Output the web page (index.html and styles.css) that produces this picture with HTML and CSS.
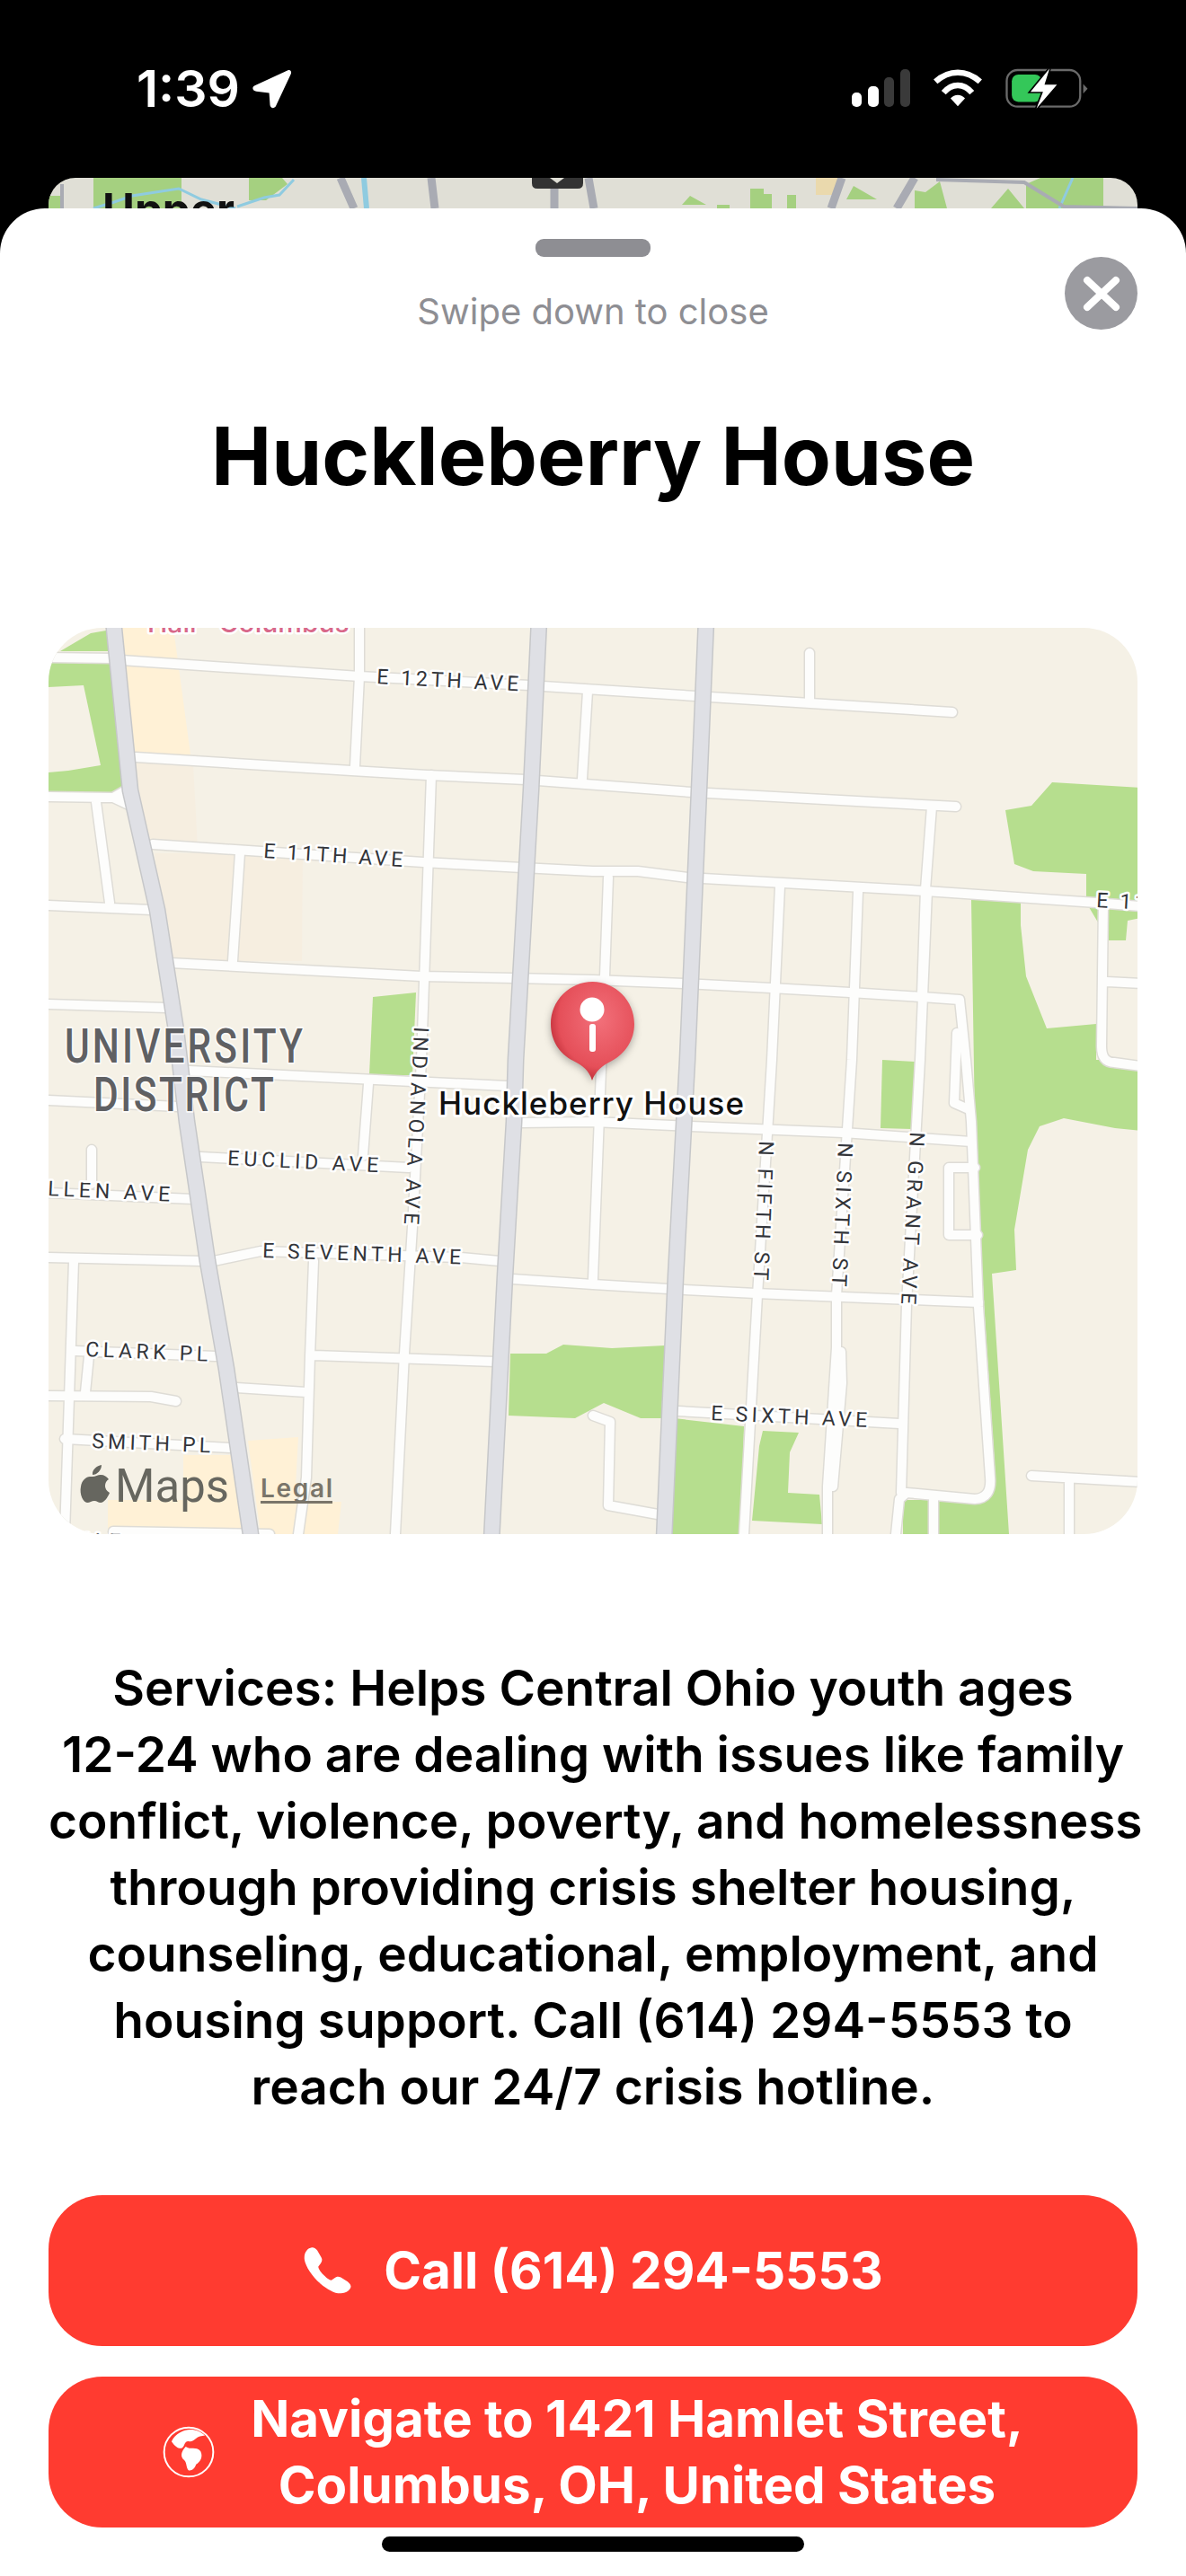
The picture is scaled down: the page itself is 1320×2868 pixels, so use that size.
FILE: index.html
```html
<!DOCTYPE html>
<html>
<head>
  <meta charset="UTF-8">
  <title>Huckleberry House</title>
  <link rel="stylesheet" href="styles.css">
</head>
<body>
  <div class="status-bar">
    <div class="status-left">
      <span class="time">1:39</span>
      <svg class="arrow-icon" viewBox="414 19 138 138"><path fill="#fff" d="M538 23C546 20 552 28 548 36L497 145C492 155 478 153 477 142L474 100L430 95C417 93 414 80 425 75Z"/></svg>
    </div>
    <div class="status-right">
      <svg class="signal-icon" viewBox="0 0 65 42">
        <rect x="0" y="26" width="11" height="16" rx="5" fill="#fff"/>
        <rect x="18" y="19" width="12" height="23" rx="5" fill="#fff"/>
        <rect x="36" y="9" width="11" height="33" rx="5" fill="#3a3a3a"/>
        <rect x="54" y="0" width="11" height="42" rx="5" fill="#3a3a3a"/>
      </svg>
      <svg class="wifi-icon" viewBox="318 20 174 128">
        <path fill="none" stroke="#fff" stroke-width="20" d="M328 62C375 20 435 20 482 62"/>
        <path fill="none" stroke="#fff" stroke-width="20" d="M356 100C385 66 425 66 454 100"/>
        <path fill="#fff" d="M405 147L380 120C392 104 418 104 430 120Z"/>
      </svg>
      <svg class="battery-icon" viewBox="564 14 280 142">
        <rect x="568" y="23" width="247" height="123" rx="36" fill="none" stroke="#6a6a6a" stroke-width="7"/>
        <rect x="585" y="38" width="100" height="92" rx="22" fill="#34c759"/>
        <path fill="#6a6a6a" d="M825 70L840 86L825 102Z"/>
        <path fill="#fff" stroke="#000" stroke-width="10" paint-order="stroke" d="M712 18L648 96H690L668 152L737 72H695Z"/>
      </svg>
    </div>
  </div>

  <div class="back-card">
    <svg class="back-map" viewBox="54 198 1212 80">
      <rect x="54" y="198" width="1212" height="80" fill="#e0dfd6"/>
      <path fill="#a5d080" d="M104 198H202V240H104ZM54 218H69V240H54ZM277 198H314L320 205L296 223H277ZM835 210H850V216H859V240H835ZM876 217H886V240H876ZM759 228L768 218L786 228ZM798 228H812V240H798ZM942 222L950 207L976 222ZM1018 232V212L1030 214L1046 202L1054 232ZM1103 232L1122 210L1140 232ZM1142 205L1158 198H1228V232H1142Z"/>
      <path fill="#ead9ad" d="M908 198H932V217H908Z"/>
      <path fill="none" stroke="#8fcbe0" stroke-width="3" d="M104 232L127 225L147 218L199 210L224 222L262 232M264 230L294 220L311 217L327 200M1194 198L1179 232"/>
      <path fill="none" stroke="#8fcbe0" stroke-width="6" d="M405 198L408 232"/>
      <path fill="none" stroke="#a9abb3" stroke-width="4" d="M69 205V232M1042 200L1140 203L1184 230L1266 232"/>
      <path fill="none" stroke="#a9abb3" stroke-width="9" d="M379 198L394 232M480 198L484 232M617 205V232M655 198L661 232M937 198L925 232M1018 198L998 232"/>
      <path fill="#333" d="M592 198H612L620 204L628 198H649V204Q649 210 643 210H598Q592 210 592 204Z"/>
      <text class="back-label" x="114" y="251" textLength="147" lengthAdjust="spacingAndGlyphs">Upper</text>
    </svg>
  </div>

  <div class="sheet">
    <div class="handle"></div>
    <button class="close-btn">
      <svg viewBox="0 0 42 40"><path fill="none" stroke="#fff" stroke-width="8" stroke-linecap="round" d="M5 5L37 35M37 5L5 35"/></svg>
    </button>
    <div class="swipe-hint">Swipe down to close</div>
    <h1 class="title">Huckleberry House</h1>

    <div class="map">
      <svg viewBox="54 699 1212 1009">
        <defs>
          <radialGradient id="pin-fill" cx="0.58" cy="0.38" r="0.62">
            <stop offset="0" stop-color="#f2707a"/>
            <stop offset="0.78" stop-color="#e54f59"/>
            <stop offset="1" stop-color="#c1303a"/>
          </radialGradient>
          <g id="streets">
            <path d="M54 732L126 733M135 735L400 753L589 763L774 775L1060 793"/>
            <path d="M901 727V780M400 699V753L395 853M654 770L648 867"/>
            <path d="M151 843L391 858L475 863L585 868L770 882L1064 898"/>
            <path d="M1037 898L1030 990L1026 1107"/>
            <path d="M54 887L126 888L145 877M126 888L145 897M107 893L122 1005"/>
            <path d="M170 940L471 960L581 966L660 970H710L765 977L1030 992L1220 1005L1270 1009"/>
            <path d="M480 863L469 1180L459 1366L450 1507L440 1708"/>
            <path d="M267 950L259 1070M54 1008L168 1013M54 1118L185 1122"/>
            <path d="M189 1072L469 1087L572 1089L660 1091L761 1095L858 1100L946 1105L1026 1110L1068 1113L1075 1180L1081 1249L1089 1455L1102 1645Q1104 1668 1085 1669L1009 1662L1001 1669L997 1708"/>
            <path d="M868 987L859 1180L843 1442L828 1708"/>
            <path d="M955 993L948 1180L931 1442V1500L921 1655V1708M936 1505L937 1540L927 1655"/>
            <path d="M1032 992L1024 1180L1009 1452L1003 1662"/>
            <path d="M677 977L673 1087L660 1424"/>
            <path d="M54 1225L198 1232M210 1192L564 1209M579 1250L660 1249L769 1254L938 1261L1081 1271"/>
            <path d="M410 1207L404 1287M223 1288L455 1300M54 1328L215 1335M102 1280V1318"/>
            <path d="M54 1400L225 1404M238 1404L290 1393L513 1400L556 1404M570 1424L660 1430L744 1435L841 1440L1089 1450"/>
            <path d="M82 1404L72 1708M349 1404L345 1510L341 1645L332 1708M349 1509L551 1516M263 1545L341 1550"/>
            <path d="M84 1504L240 1510M99 1510L95 1550M54 1554L168 1555L196 1560M72 1602L257 1612M126 1705L300 1708"/>
            <path d="M755 1571L1001 1585M660 1576L679 1583L677 1676L732 1686"/>
            <path d="M1085 1300H1056V1375H1088M1065 1150L1062 1228L1078 1235"/>
            <path d="M1228 1005L1226 1165Q1226 1183 1240 1183L1270 1187M1232 1093L1270 1095"/>
            <path d="M1148 1643L1270 1650M1190 1648V1708M1039 1670V1708"/>
          </g>
          <g id="arterials">
            <path d="M126 690L145 880L175 1013L196 1147L208 1249L231 1404L252 1524L280 1715"/>
            <path d="M600 690L591 880L574 1180L572 1249L562 1421L547 1715"/>
            <path d="M786 690L778 880L765 1180L752 1421L739 1715"/>
          </g>
        </defs>

        <rect x="54" y="699" width="1212" height="1009" fill="#f5f1e6"/>

        <path fill="#f6eee0" d="M150 850H215L220 945H165ZM172 950H337L336 1070H185Z"/>
        <path fill="#fff1d6" d="M135 699H193L212 840H150ZM204 1620H260L272 1708H120V1670H204ZM276 1604L332 1600L328 1672H380L376 1708H290Z"/>

        <path fill="#b6de8e" d="M67 725L101 705L118 702L122 725Z"/>
        <path fill="#b6de8e" d="M54 737H122L140 880L126 883H54Z"/>
        <path fill="#f5f1e6" d="M54 765L93 763L112 852L76 858L54 860Z"/>
        <path fill="#b6de8e" d="M415 1110L463 1105L459 1197L411 1197Z"/>
        <path fill="#b6de8e" d="M1119 902L1148 897L1171 871L1270 877V1022L1255 1025L1253 1047L1234 1047L1209 1005V973L1150 970L1129 962Z"/>
        <path fill="#b6de8e" d="M1081 1002H1136V1030L1142 1087L1165 1145L1220 1140V1180H1270V1259L1241 1256L1184 1245L1157 1254L1144 1280L1129 1369L1131 1414L1104 1418L1123 1708H1045V1672H1085L1108 1645L1095 1450L1085 1250Z"/>
        <path fill="#b6de8e" d="M1005 1670H1035V1708H1005Z"/>
        <path fill="#b6de8e" d="M568 1507H608L627 1497L681 1501L740 1498L736 1579H713L672 1562L640 1579L566 1576Z"/>
        <path fill="#b6de8e" d="M750 1579L828 1588L825 1708H748Z"/>
        <path fill="#b6de8e" d="M849 1593L889 1595L879 1617L877 1662L912 1664L915 1697L837 1693L845 1610Z"/>
        <path fill="#b6de8e" d="M982 1180L1018 1182L1014 1257L980 1256Z"/>

        <use href="#streets" class="street-edge"/>
        <use href="#streets" class="street"/>
        <use href="#arterials" class="arterial-edge"/>
        <use href="#arterials" class="arterial"/>

        <text class="poi-top" x="164" y="704">Hall · Columbus</text>

        <text class="road-label" transform="translate(419 761) rotate(3)" textLength="158">E 12TH AVE</text>
        <text class="road-label" transform="translate(293 955) rotate(3.7)" textLength="155">E 11TH AVE</text>
        <text class="road-label" transform="translate(1220 1010) rotate(3)" textLength="155">E 11TH AVE</text>
        <text class="road-label" transform="translate(253 1297) rotate(2.8)" textLength="168">EUCLID AVE</text>
        <text class="road-label" transform="translate(33 1330) rotate(2.8)" textLength="156">ALLEN AVE</text>
        <text class="road-label" transform="translate(292 1400) rotate(1.9)" textLength="221">E SEVENTH AVE</text>
        <text class="road-label" transform="translate(95 1510) rotate(2.3)" textLength="136">CLARK PL</text>
        <text class="road-label" transform="translate(102 1612) rotate(2.3)" textLength="132">SMITH PL</text>
        <text class="road-label" transform="translate(70 1722) rotate(2)" textLength="64">AVE</text>
        <text class="road-label" transform="translate(791 1581) rotate(2.6)" textLength="174">E SIXTH AVE</text>
        <text class="road-label" transform="translate(845 1270) rotate(92.2)" textLength="155">N FIFTH ST</text>
        <text class="road-label" transform="translate(933 1272) rotate(92.5)" textLength="160">N SIXTH ST</text>
        <text class="road-label" transform="translate(1013 1260) rotate(93)" textLength="192">N GRANT AVE</text>
        <text class="road-label" transform="translate(461 1143) rotate(92.9)" textLength="220">INDIANOLA AVE</text>

        <text class="district" transform="translate(72 1183) scale(0.8 1)" textLength="331">UNIVERSITY</text>
        <text class="district" transform="translate(104 1237) scale(0.8 1)" textLength="251">DISTRICT</text>

        <g class="pin">
          <path fill="url(#pin-fill)" d="M659 1203C656 1192 648 1186 638 1181C622 1173 613 1158 613 1140C613 1114 634 1093 659.500 1093C685 1093 706 1114 706 1140C706 1158 696 1173 681 1181C671 1186 663 1192 659 1203Z"/>
          <circle cx="659" cy="1124" r="13.500" fill="#fff"/>
          <rect x="656" y="1140" width="7" height="31" rx="3" fill="#fff"/>
        </g>
        <text class="place-label" x="488" y="1241" textLength="340">Huckleberry House</text>

        <path fill="#66665f" d="M113 1631C113 1637 108 1642 103 1642C102 1636 108 1632 113 1631ZM103 1644C106 1644 109 1642 112 1642C116 1642 119 1644 121 1647C116 1650 115 1658 122 1662C120 1667 116 1673 112 1673C109 1673 108 1671 105 1671C102 1671 100 1673 97 1673C93 1673 88 1664 90 1655C91 1648 96 1644 100 1644C101 1644 102 1644 103 1644Z"/>
        <text class="maps-word" x="128" y="1672" textLength="127" lengthAdjust="spacingAndGlyphs">Maps</text>
        <text class="legal" x="290" y="1667" textLength="80">Legal</text>
        <rect x="290" y="1671" width="80" height="3" fill="#7a756a"/>
      </svg>
    </div>

    <p class="services">Services: Helps Central Ohio youth ages<br>12-24 who are dealing with issues like family<br>conflict, violence, poverty, and homelessness<br>through providing crisis shelter housing,<br>counseling, educational, employment, and<br>housing support. Call (614) 294-5553 to<br>reach our 24/7 crisis hotline.</p>

    <div class="actions">
      <button class="action-btn">
        <svg class="phone-icon" viewBox="532 62 166 164"><path fill="#fff" d="M562 66C548 68 535 82 537 105C540 130 565 165 590 187C615 208 640 222 660 221C680 220 693 208 694 198C694 192 690 187 683 181L660 167C652 163 645 164 638 170L628 177C620 176 608 165 600 157C592 148 584 137 584 130L592 120C597 113 598 106 594 99L580 75C574 68 568 65 562 66Z"/></svg>
        <span>Call (614) 294-5553</span>
      </button>
      <button class="action-btn">
        <svg class="globe-icon" viewBox="52 660 176 176">
          <circle cx="140" cy="748" r="83" fill="none" stroke="#fff" stroke-width="6"/>
          <path fill="#fff" d="M82 712C95 685 125 672 145 672C165 672 183 680 195 692L178 695C165 698 155 715 142 712C132 710 128 716 124 726C118 742 100 738 82 712Z"/>
          <path fill="#fff" d="M130 730C145 742 165 728 180 745C190 765 178 782 165 790C160 805 150 812 140 810C130 800 135 785 125 775C110 765 115 745 130 730Z"/>
        </svg>
        <span>Navigate to 1421 Hamlet Street,<br>Columbus, OH, United States</span>
      </button>
    </div>
    <div class="home-bar"></div>
  </div>
</body>
</html>
```

FILE: styles.css
```css
body {
  margin: 0;
  background: #000;
  font-family: Inter, "Liberation Sans", sans-serif;
  color: #000;
}
.status-bar {
  height: 198px;
  box-sizing: border-box;
  padding: 77px 108px 0 152px;
  display: flex;
  justify-content: space-between;
  align-items: flex-start;
}
.status-left {
  display: flex;
  align-items: flex-start;
  gap: 13px;
}
.time {
  color: #fff;
  font-size: 57px;
  font-weight: 600;
  line-height: 44px;
}
.arrow-icon {
  width: 45px;
  height: 45px;
}
.status-right {
  display: flex;
  align-items: flex-start;
  gap: 25px;
}
.signal-icon {
  width: 65px;
  height: 42px;
}
.wifi-icon {
  width: 56px;
  height: 42px;
}
.battery-icon {
  width: 93px;
  height: 47px;
  margin-top: -2px;
}
.back-card {
  height: 80px;
  margin: 0 54px;
  border-radius: 30px 30px 0 0;
  overflow: hidden;
}
.back-map {
  display: block;
  width: 100%;
  height: 100%;
}
.back-label {
  font-family: Inter, sans-serif;
  font-size: 50px;
  font-weight: 700;
  fill: #111;
}
.sheet {
  position: relative;
  margin-top: -46px;
  padding: 34px 54px 27px;
  background: #fff;
  border-radius: 50px 50px 0 0;
}
.handle {
  width: 128px;
  height: 20px;
  margin: 0 auto;
  border-radius: 9px;
  background: #8e8e93;
}
.close-btn {
  position: absolute;
  top: 54px;
  right: 54px;
  width: 81px;
  height: 81px;
  padding: 0;
  border: none;
  border-radius: 50%;
  background: #9b9ba0;
  display: flex;
  align-items: center;
  justify-content: center;
}
.close-btn svg {
  width: 42px;
  height: 40px;
}
.swipe-hint {
  margin-top: 38px;
  font-size: 40px;
  line-height: 46px;
  text-align: center;
  color: #8e8e93;
}
.title {
  margin: 83px 0 0;
  font-size: 90px;
  font-weight: 700;
  line-height: 110px;
  text-align: center;
}
.map {
  height: 1009px;
  margin-top: 136px;
  border-radius: 60px;
  overflow: hidden;
}
.map svg {
  display: block;
  width: 100%;
  height: 100%;
}
.street-edge,
.street,
.arterial-edge,
.arterial {
  fill: none;
  stroke-linejoin: round;
}
.street-edge {
  stroke: #dedcd6;
  stroke-width: 13px;
  stroke-linecap: round;
}
.street {
  stroke: #fdfdfc;
  stroke-width: 10px;
  stroke-linecap: round;
}
.arterial-edge {
  stroke: #c6c7c9;
  stroke-width: 19px;
}
.arterial {
  stroke: #dfe0e5;
  stroke-width: 16px;
}
.road-label,
.district,
.place-label,
.poi-top {
  paint-order: stroke;
  stroke: #fff;
  stroke-linejoin: round;
}
.road-label {
  font-family: Roboto, sans-serif;
  font-size: 23px;
  fill: #33353a;
  stroke-width: 5px;
}
.district {
  font-family: Roboto, sans-serif;
  font-size: 53px;
  font-weight: 500;
  fill: #5f6063;
  stroke-width: 4px;
  stroke-opacity: 0.7;
}
.place-label {
  font-family: Inter, sans-serif;
  font-size: 35px;
  font-weight: 500;
  fill: #111;
  stroke-width: 6px;
}
.poi-top {
  font-family: Inter, sans-serif;
  font-size: 30px;
  font-weight: 500;
  fill: #d8688a;
  stroke-width: 5px;
}
.pin {
  filter: drop-shadow(0 3px 4px rgba(0, 0, 0, 0.3));
}
.maps-word {
  font-family: Roboto, sans-serif;
  font-size: 52px;
  fill: #66665f;
}
.legal {
  font-family: Inter, sans-serif;
  font-size: 28px;
  font-weight: 600;
  fill: #7a756a;
}
.services {
  margin: 134px 0 0;
  font-size: 55px;
  font-weight: 600;
  line-height: 74px;
  text-align: center;
  white-space: nowrap;
}
.actions {
  display: flex;
  flex-direction: column;
  gap: 34px;
  margin-top: 84px;
}
.action-btn {
  height: 168px;
  padding: 0;
  border: none;
  border-radius: 60px;
  background: #ff3b30;
  color: #fff;
  font-family: inherit;
  font-size: 56.500px;
  font-weight: 700;
  line-height: 74px;
  display: flex;
  align-items: center;
  justify-content: center;
}
.phone-icon {
  width: 55px;
  height: 54px;
  margin-right: 35px;
}
.globe-icon {
  width: 58px;
  height: 58px;
  margin-right: 40px;
}
.home-bar {
  width: 470px;
  height: 17px;
  margin: 10px auto 0;
  border-radius: 9px;
  background: #000;
}
```
